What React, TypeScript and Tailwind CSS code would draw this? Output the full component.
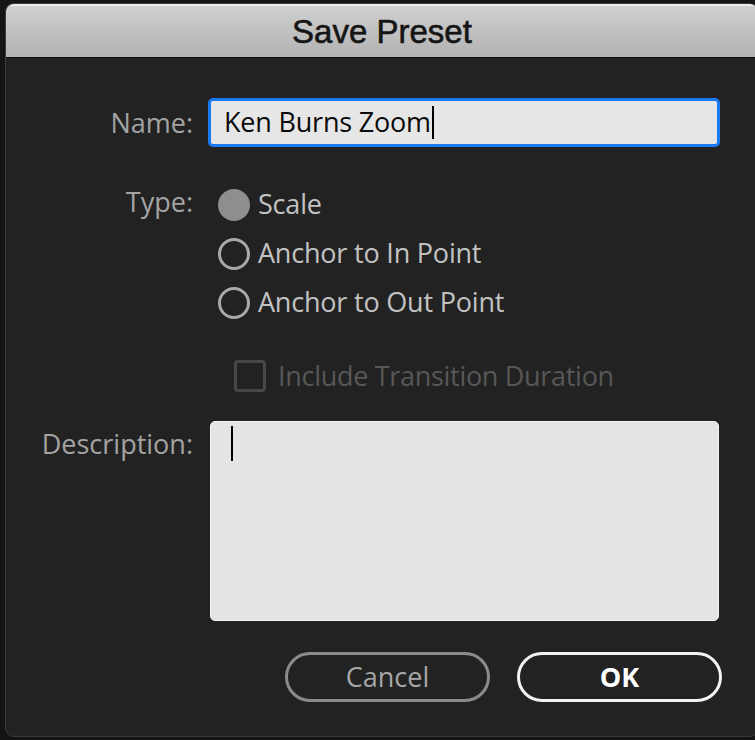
import React from 'react';

const radios = [
  { label: 'Scale', checked: true },
  { label: 'Anchor to In Point', checked: false },
  { label: 'Anchor to Out Point', checked: false },
];

function Radio({ label, checked }: { label: string; checked: boolean }) {
  return (
    <div className="flex items-center h-[49px] pl-[10px]">
      {checked ? (
        <span className="w-[32px] h-[32px] rounded-full bg-[#8e8e8e]" />
      ) : (
        <span className="w-[32px] h-[32px] rounded-full border-[3px] border-[#a9a9a9] bg-[#222222]" />
      )}
      <span className="ml-[8px] text-[27px] font-medium text-[#c2c2c2] tracking-[-0.2px]">{label}</span>
    </div>
  );
}

export default function App() {
  return (
    <div
      className="w-[755px] h-[740px] bg-[#141414] overflow-hidden pt-[3px] pl-[5px]"
      style={{ fontFamily: '"Open Sans", "Noto Sans", sans-serif' }}
    >
      <div className="w-[754px] h-[734px] rounded-[9px] bg-[#222222] border border-[#3b3b3b] overflow-hidden flex flex-col">
        {/* barra del titolo */}
        <div className="h-[54px] shrink-0 flex items-center justify-center bg-gradient-to-b from-[#d0d0d0] to-[#b2b2b2] border-t-2 border-[#ececec] border-b border-b-[#0c0c0c]">
          <span
            className="text-[33px] text-[#151515] leading-none [-webkit-text-stroke:0.6px_#151515]"
            style={{ fontFamily: '"Liberation Sans", Arial, sans-serif' }}
          >
            Save Preset
          </span>
        </div>

        <div className="flex flex-col pt-[40px]">
          {/* Name */}
          <div className="flex items-center">
            <span className="w-[187px] text-right text-[27px] font-medium text-[#a3a3a3] leading-none">Name:</span>
            <div className="ml-[15px] w-[512px] h-[49px] rounded-[5px] border-[3px] border-[#1b7bf0] bg-[#e6e6e6] flex items-center pl-[13px]">
              <span className="text-[27px] font-medium text-[#0a0a0a] tracking-[-0.2px]">Ken Burns Zoom</span>
              <span className="ml-[1px] w-[2px] h-[33px] bg-black" />
            </div>
          </div>

          {/* Type */}
          <div className="flex mt-[33px]">
            <span className="w-[187px] text-right text-[27px] font-medium text-[#a3a3a3] leading-[44px]">Type:</span>
            <div className="ml-[15px] flex flex-col">
              {radios.map((r) => (
                <Radio key={r.label} label={r.label} checked={r.checked} />
              ))}
            </div>
          </div>

          {/* Include Transition Duration (disabilitato) */}
          <div className="flex items-center mt-[33px] h-[32px] pl-[228px]">
            <span className="w-[32px] h-[32px] rounded-[4px] border-[3px] border-[#474747]" />
            <span className="ml-[12px] text-[27px] font-medium text-[#575757] tracking-[-0.3px]">Include Transition Duration</span>
          </div>

          {/* Description */}
          <div className="flex mt-[29px]">
            <span className="w-[187px] text-right text-[27px] font-medium text-[#a3a3a3] leading-[36px] pt-[5px]">Description:</span>
            <div className="ml-[17px] w-[509px] h-[200px] rounded-[5px] bg-[#e4e4e4] border border-[#f4f4f4] pl-[20px] pt-[4px]">
              <span className="block w-[2px] h-[35px] bg-black" />
            </div>
          </div>

          {/* Pulsanti */}
          <div className="flex mt-[31px] pl-[279px] gap-[27px]">
            <button className="w-[205px] h-[50px] rounded-full border-[3px] border-[#8b8b8b] text-[27px] font-medium text-[#a6a6a6] flex items-center justify-center">
              Cancel
            </button>
            <button className="w-[205px] h-[50px] rounded-full border-[3px] border-[#f2f2f2] text-[27px] font-bold text-white flex items-center justify-center">
              OK
            </button>
          </div>
        </div>
      </div>
    </div>
  );
}
